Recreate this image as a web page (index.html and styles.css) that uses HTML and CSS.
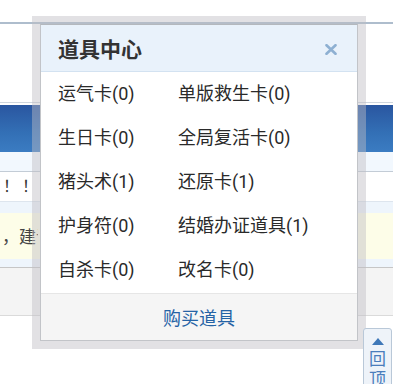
FILE: index.html
```html
<!doctype html>
<html lang="zh">
  <head>
    <meta charset="utf-8" />
    <meta name="viewport" content="width=device-width, initial-scale=1" />
    <title>道具中心</title>
    <link rel="stylesheet" href="styles.css">
  </head>
  <body>
    <div class="page">
      <div class="top-space"></div>
      <div class="top-line"></div>
      <div class="blank"></div>
      <div class="bar-line"></div>
      <div class="blue-bar"></div>
      <div class="sub-row"></div>
      <div class="text-row">！！</div>
      <div class="notice">
        <div class="notice-text"><span class="clip">，建议</span></div>
      </div>
      <div class="grey-row"></div>
    </div>

    <div class="mask">
      <div class="dialog">
        <div class="dialog-head">
          <span class="dialog-title">道具中心</span>
          <span class="close">
            <svg width="12" height="11" viewBox="0 0 12 11">
              <path d="M1.5 1.2L10.5 9.8M10.5 1.2L1.5 9.8" stroke="#8eb0d2" stroke-width="2.6" stroke-linecap="round" />
            </svg>
          </span>
        </div>
        <ul class="items">
          <li>运气卡(0)</li>
          <li>单版救生卡(0)</li>
          <li>生日卡(0)</li>
          <li>全局复活卡(0)</li>
          <li>猪头术(1)</li>
          <li>还原卡(1)</li>
          <li>护身符(0)</li>
          <li>结婚办证道具(1)</li>
          <li>自杀卡(0)</li>
          <li>改名卡(0)</li>
        </ul>
        <div class="dialog-foot">
          <a class="buy" href="#">购买道具</a>
        </div>
      </div>
    </div>

    <div class="back-top">
      <span class="arrow"></span>
      <span class="back-text">回顶</span>
    </div>
  </body>
</html>
```

FILE: styles.css
```css
body {
  margin: 0;
  padding: 0;
  background: #ffffff;
  font-family: Roboto, 'Noto Sans CJK SC', sans-serif;
  color: #333333;
  overflow: hidden;
  height: 384px;
}

.page {
  width: 393px;
}

.top-space {
  height: 22px;
}

.top-line {
  height: 2px;
  background: #aebdcd;
}

.blank {
  height: 78px;
}

.bar-line {
  height: 1px;
  background: #cfd6de;
  margin-bottom: 2px;
}

.blue-bar {
  height: 47px;
  background: linear-gradient(180deg, #2a56a0 0%, #3370b6 60%, #3b7cc2 100%);
}

.sub-row {
  height: 19px;
  background: #f2f8fe;
  border-bottom: 1px solid #c3ccd6;
}

.text-row {
  height: 29px;
  line-height: 29px;
  padding-left: 3px;
  font-size: 16px;
  letter-spacing: 3px;
  color: #333333;
  border-bottom: 1px solid #dde5ee;
}

.notice {
  background: #eef5fc;
  padding: 11px 0 8px;
  border-bottom: 1px solid #c6c6c6;
}

.notice-text {
  height: 46px;
  line-height: 48px;
  background: #fdfde8;
  padding-left: 2px;
  font-size: 17px;
  color: #444444;
}

.clip {
  display: inline-block;
  width: 36px;
  overflow: hidden;
  white-space: nowrap;
  vertical-align: top;
}

.grey-row {
  height: 47px;
  background: #f4f4f4;
  border-bottom: 1px solid #dadada;
}

.mask {
  position: fixed;
  left: 32px;
  top: 16px;
  padding: 8px;
  background: rgba(190, 188, 196, 0.45);
}

.dialog {
  width: 316px;
  background: #ffffff;
  border: 1px solid #c2c4c8;
  border-top-color: #b4b8bd;
}

.dialog-head {
  height: 46px;
  display: flex;
  align-items: center;
  justify-content: space-between;
  padding: 0 20px 0 17px;
  background: #e9f2fb;
  border-bottom: 1px solid #d3e2f1;
}

.dialog-title {
  font-size: 21px;
  font-weight: 700;
  color: #333333;
}

.close {
  display: flex;
  margin-top: 2px;
}

.items {
  list-style: none;
  margin: 0;
  padding: 0 0 1px 17px;
  display: grid;
  grid-template-columns: 120px 1fr;
}

.items li {
  height: 44px;
  line-height: 44px;
  font-size: 18px;
  color: #2a2a2a;
  white-space: nowrap;
}

.dialog-foot {
  height: 46px;
  display: flex;
  align-items: center;
  justify-content: center;
  background: #f5f5f5;
  border-top: 1px solid #e6e6e6;
}

.buy {
  font-size: 18px;
  color: #2563a5;
  text-decoration: none;
}

.back-top {
  position: fixed;
  left: 363px;
  top: 328px;
  width: 27px;
  height: 70px;
  display: flex;
  flex-direction: column;
  align-items: center;
  background: #eef3f9;
  border: 1px solid #b9c8d8;
  border-radius: 3px;
}

.arrow {
  margin-top: 9px;
  width: 0;
  height: 0;
  border-left: 6.5px solid transparent;
  border-right: 6.5px solid transparent;
  border-bottom: 7px solid #3f78b8;
}

.back-text {
  margin-top: 4px;
  width: 17px;
  font-size: 17px;
  line-height: 20px;
  color: #4a7dbc;
  text-align: center;
}
```
